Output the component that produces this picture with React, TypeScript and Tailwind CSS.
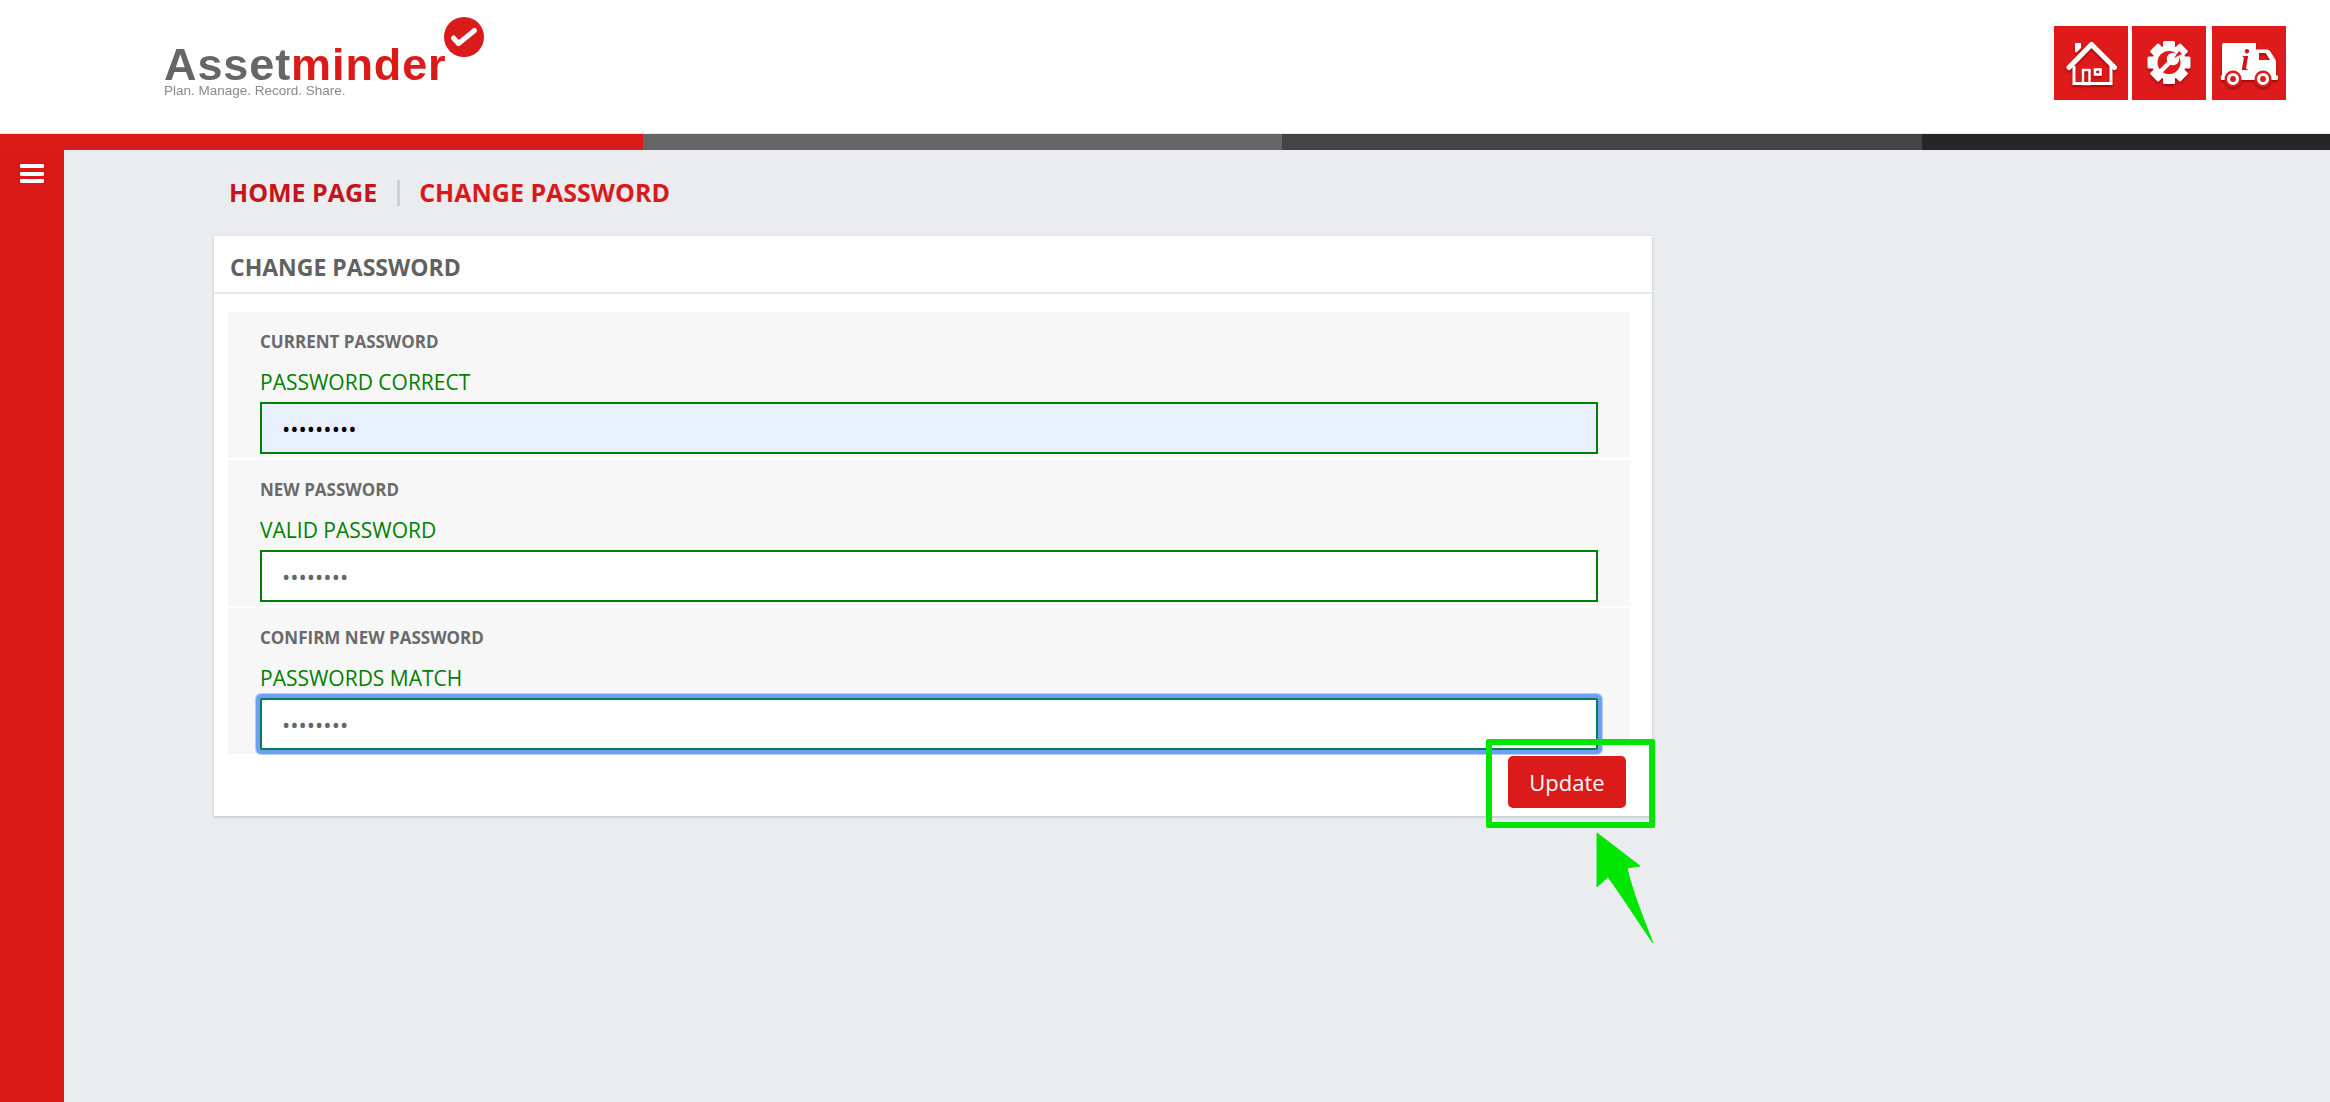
import React from "react";

const HomeIcon = () => (
  <svg width="74" height="74" viewBox="0 0 74 74" className="block blur-[0.4px] drop-shadow-[0_2px_1px_rgba(110,0,0,0.55)]">
    <path d="M21 17 H27 V22 L22.5 26.5 L21 26 Z" fill="#fff" />
    <path d="M15 41.5 L37.5 18.5 L60.5 41.5" fill="none" stroke="#fff" strokeWidth="5" strokeLinecap="round" strokeLinejoin="round" />
    <path d="M20 40 V57.5 H57 V40" fill="none" stroke="#fff" strokeWidth="3" />
    <rect x="29" y="44" width="6.5" height="14" fill="none" stroke="#fff" strokeWidth="2.4" />
    <rect x="41" y="43.5" width="5.5" height="5" fill="none" stroke="#fff" strokeWidth="2.6" />
  </svg>
);

const GearIcon = () => {
  const teeth = [0, 45, 90, 135, 180, 225, 270, 315];
  return (
    <svg width="74" height="74" viewBox="0 0 74 74" className="block blur-[0.4px] drop-shadow-[0_2px_1px_rgba(110,0,0,0.55)]">
      <g fill="#fff">
        {teeth.map((a) => (
          <rect key={a} x="31" y="15" width="12" height="9" rx="1.5" transform={`rotate(${a} 37 36.5)`} />
        ))}
        <circle cx="37" cy="36.5" r="17" />
      </g>
      <circle cx="37" cy="36.5" r="11.5" fill="#df1a1a" />
      <path d="M28 46 L38 36" fill="none" stroke="#fff" strokeWidth="4.5" strokeLinecap="round" />
      <circle cx="41" cy="33" r="6.2" fill="#fff" />
      <path d="M42 32 L47 25 L50 28 Z" fill="#df1a1a" />
    </svg>
  );
};

const TruckIcon = () => (
  <svg width="74" height="74" viewBox="0 0 74 74" className="block blur-[0.3px] drop-shadow-[0_2px_1px_rgba(110,0,0,0.55)]">
    <path
      fillRule="evenodd"
      fill="#fff"
      d="M12 17 H44 V23.5 H55.5 Q57 23.5 58 25 L63 33 Q64 34.5 64 36 V49.5 H66 Q66.5 52 65.5 54 H9 Q8.5 52 9 49.5 H10 V19 a2 2 0 0 1 2 -2 Z M47 27 V34 H58 L54 27.5 Q53.5 27 53 27 Z"
    />
    <circle cx="21" cy="53" r="8.5" fill="#df1a1a" />
    <circle cx="51" cy="53" r="8.5" fill="#df1a1a" />
    <circle cx="21" cy="53" r="4.5" fill="none" stroke="#fff" strokeWidth="3.2" />
    <circle cx="51" cy="53" r="4.5" fill="none" stroke="#fff" strokeWidth="3.2" />
    <text x="29" y="44" fill="#c8161d" fontFamily="'Liberation Serif', serif" fontStyle="italic" fontWeight="700" fontSize="30">i</text>
  </svg>
);

const IconTile = ({ children }: { children: React.ReactNode }) => (
  <div className="w-[74px] h-[74px] bg-[#df1a1a]">{children}</div>
);

const Field = ({
  label,
  status,
  value,
  autofill,
  focused,
}: {
  label: string;
  status: string;
  value: string;
  autofill?: boolean;
  focused?: boolean;
}) => (
  <div className="bg-[#f7f7f8] h-[146px] pl-8 pt-[17px]">
    <div className="text-[17px] leading-[26px] font-bold text-[#6a6a6a] h-[26px]">{label}</div>
    <div className="text-[21px] leading-[28px] text-[#008000] mt-[13px] h-[28px]">{status}</div>
    <input
      type="password"
      readOnly
      value={value}
      className={`block w-[1338px] h-[52px] mt-[6px] px-5 border-2 outline-none text-[22px] ${
        autofill ? "bg-[#e8f0fe] text-black" : "bg-white text-[#666]"
      } ${
        focused
          ? "rounded-[2px] border-[#0a7a55] shadow-[0_0_0_4px_#6d9ff5,0_0_0_5px_#b5cdfa]"
          : "border-[#008000]"
      }`}
    />
  </div>
);

export default function App() {
  return (
    <div className="relative w-[2330px] h-[1102px] overflow-hidden flex flex-col bg-[#ebecf0] font-['Open_Sans','Noto_Sans',sans-serif]">
      {/* Header */}
      <header className="h-[133px] shrink-0 bg-white flex items-center justify-between pl-[164px] pr-[44px]">
        <div className="relative w-[320px] h-[133px] font-['Liberation_Sans',sans-serif]">
          <div className="absolute left-0 top-[46px] text-[45px] leading-[38px] font-bold tracking-[0.9px] whitespace-nowrap blur-[0.4px]">
            <span className="text-[#666]">Asset</span>
            <span className="text-[#db1a1a]">minder</span>
          </div>
          <div className="absolute left-0 top-[84px] text-[13.5px] leading-[14px] text-[#8a8a8a] whitespace-nowrap blur-[0.3px]">
            Plan. Manage. Record. Share.
          </div>
          <svg width="42" height="42" viewBox="0 0 42 42" className="absolute left-[279px] top-[16px] blur-[0.3px]">
            <circle cx="21" cy="21" r="20" fill="#db1a1a" />
            <path d="M10.5 22 L15.5 27.5 L31.5 14.5" fill="none" stroke="#fff" strokeWidth="5" strokeLinecap="round" strokeLinejoin="round" />
          </svg>
        </div>
        <div className="flex items-center gap-[4px] mb-[7px]">
          <IconTile><HomeIcon /></IconTile>
          <IconTile><GearIcon /></IconTile>
          <div className="ml-[2px]">
            <IconTile><TruckIcon /></IconTile>
          </div>
        </div>
      </header>
      <div className="h-[1px] shrink-0 bg-[#e8e8ea]" />

      {/* Colour bar */}
      <div className="h-[16px] shrink-0 flex">
        <div className="w-[643px] bg-[#db1a1a]" />
        <div className="w-[639px] bg-[#666666]" />
        <div className="w-[640px] bg-[#444444]" />
        <div className="flex-1 bg-[#262626]" />
      </div>

      <div className="flex flex-1 min-h-0">
        {/* Sidebar */}
        <aside className="w-[64px] shrink-0 bg-[#d81917] flex flex-col items-center pt-[14px] gap-[3.5px]">
          <div className="w-[24px] h-[4px] rounded-[1px] bg-white" />
          <div className="w-[24px] h-[4px] rounded-[1px] bg-white" />
          <div className="w-[24px] h-[4px] rounded-[1px] bg-white" />
        </aside>

        {/* Main */}
        <main className="flex-1 pl-[150px]">
          <nav className="h-[86px] flex items-center pl-[15px] text-[25px] font-bold text-[#c4151c]">
            <span>HOME PAGE</span>
            <span className="w-[3px] h-[26px] bg-[#d0d0d0] ml-[20px] mr-[19px]" />
            <span className="text-[#d81a1a]">CHANGE PASSWORD</span>
          </nav>

          <section className="w-[1438px] h-[580px] bg-white shadow-[0_1px_3px_rgba(0,0,0,0.2)]">
            <div className="h-[58px] pl-4 pt-[7px] flex items-center border-b-2 border-[#e6e9ee] text-[23px] font-bold text-[#616161]">
              CHANGE PASSWORD
            </div>
            <div className="pt-[18px] pl-[14px] pr-[22px] flex flex-col gap-[2px]">
              <Field label="CURRENT PASSWORD" status="PASSWORD CORRECT" value="123456789" autofill />
              <Field label="NEW PASSWORD" status="VALID PASSWORD" value="12345678" />
              <Field label="CONFIRM NEW PASSWORD" status="PASSWORDS MATCH" value="12345678" focused />
            </div>
            <div className="flex justify-end pr-[26px] pt-[2px]">
              <button className="w-[118px] h-[52px] pt-[1px] bg-[#db1a1a] text-white text-[22px] rounded-[5px]">Update</button>
            </div>
          </section>
        </main>
      </div>

      {/* Annotation overlay */}
      <div className="absolute left-[1486px] top-[739px] w-[169px] h-[89px] border-[6px] border-[#00e600] rounded-[2px]" />
      <svg width="70" height="120" viewBox="0 0 70 120" className="absolute left-[1590px] top-[828px]">
        <path d="M7 5 L50 38 L37 40 C42 62 53 90 63 115 C47 92 32 68 18 49 L7 59 Z" fill="#00e600" stroke="#00e600" strokeWidth="1" strokeLinejoin="round" />
      </svg>
    </div>
  );
}
